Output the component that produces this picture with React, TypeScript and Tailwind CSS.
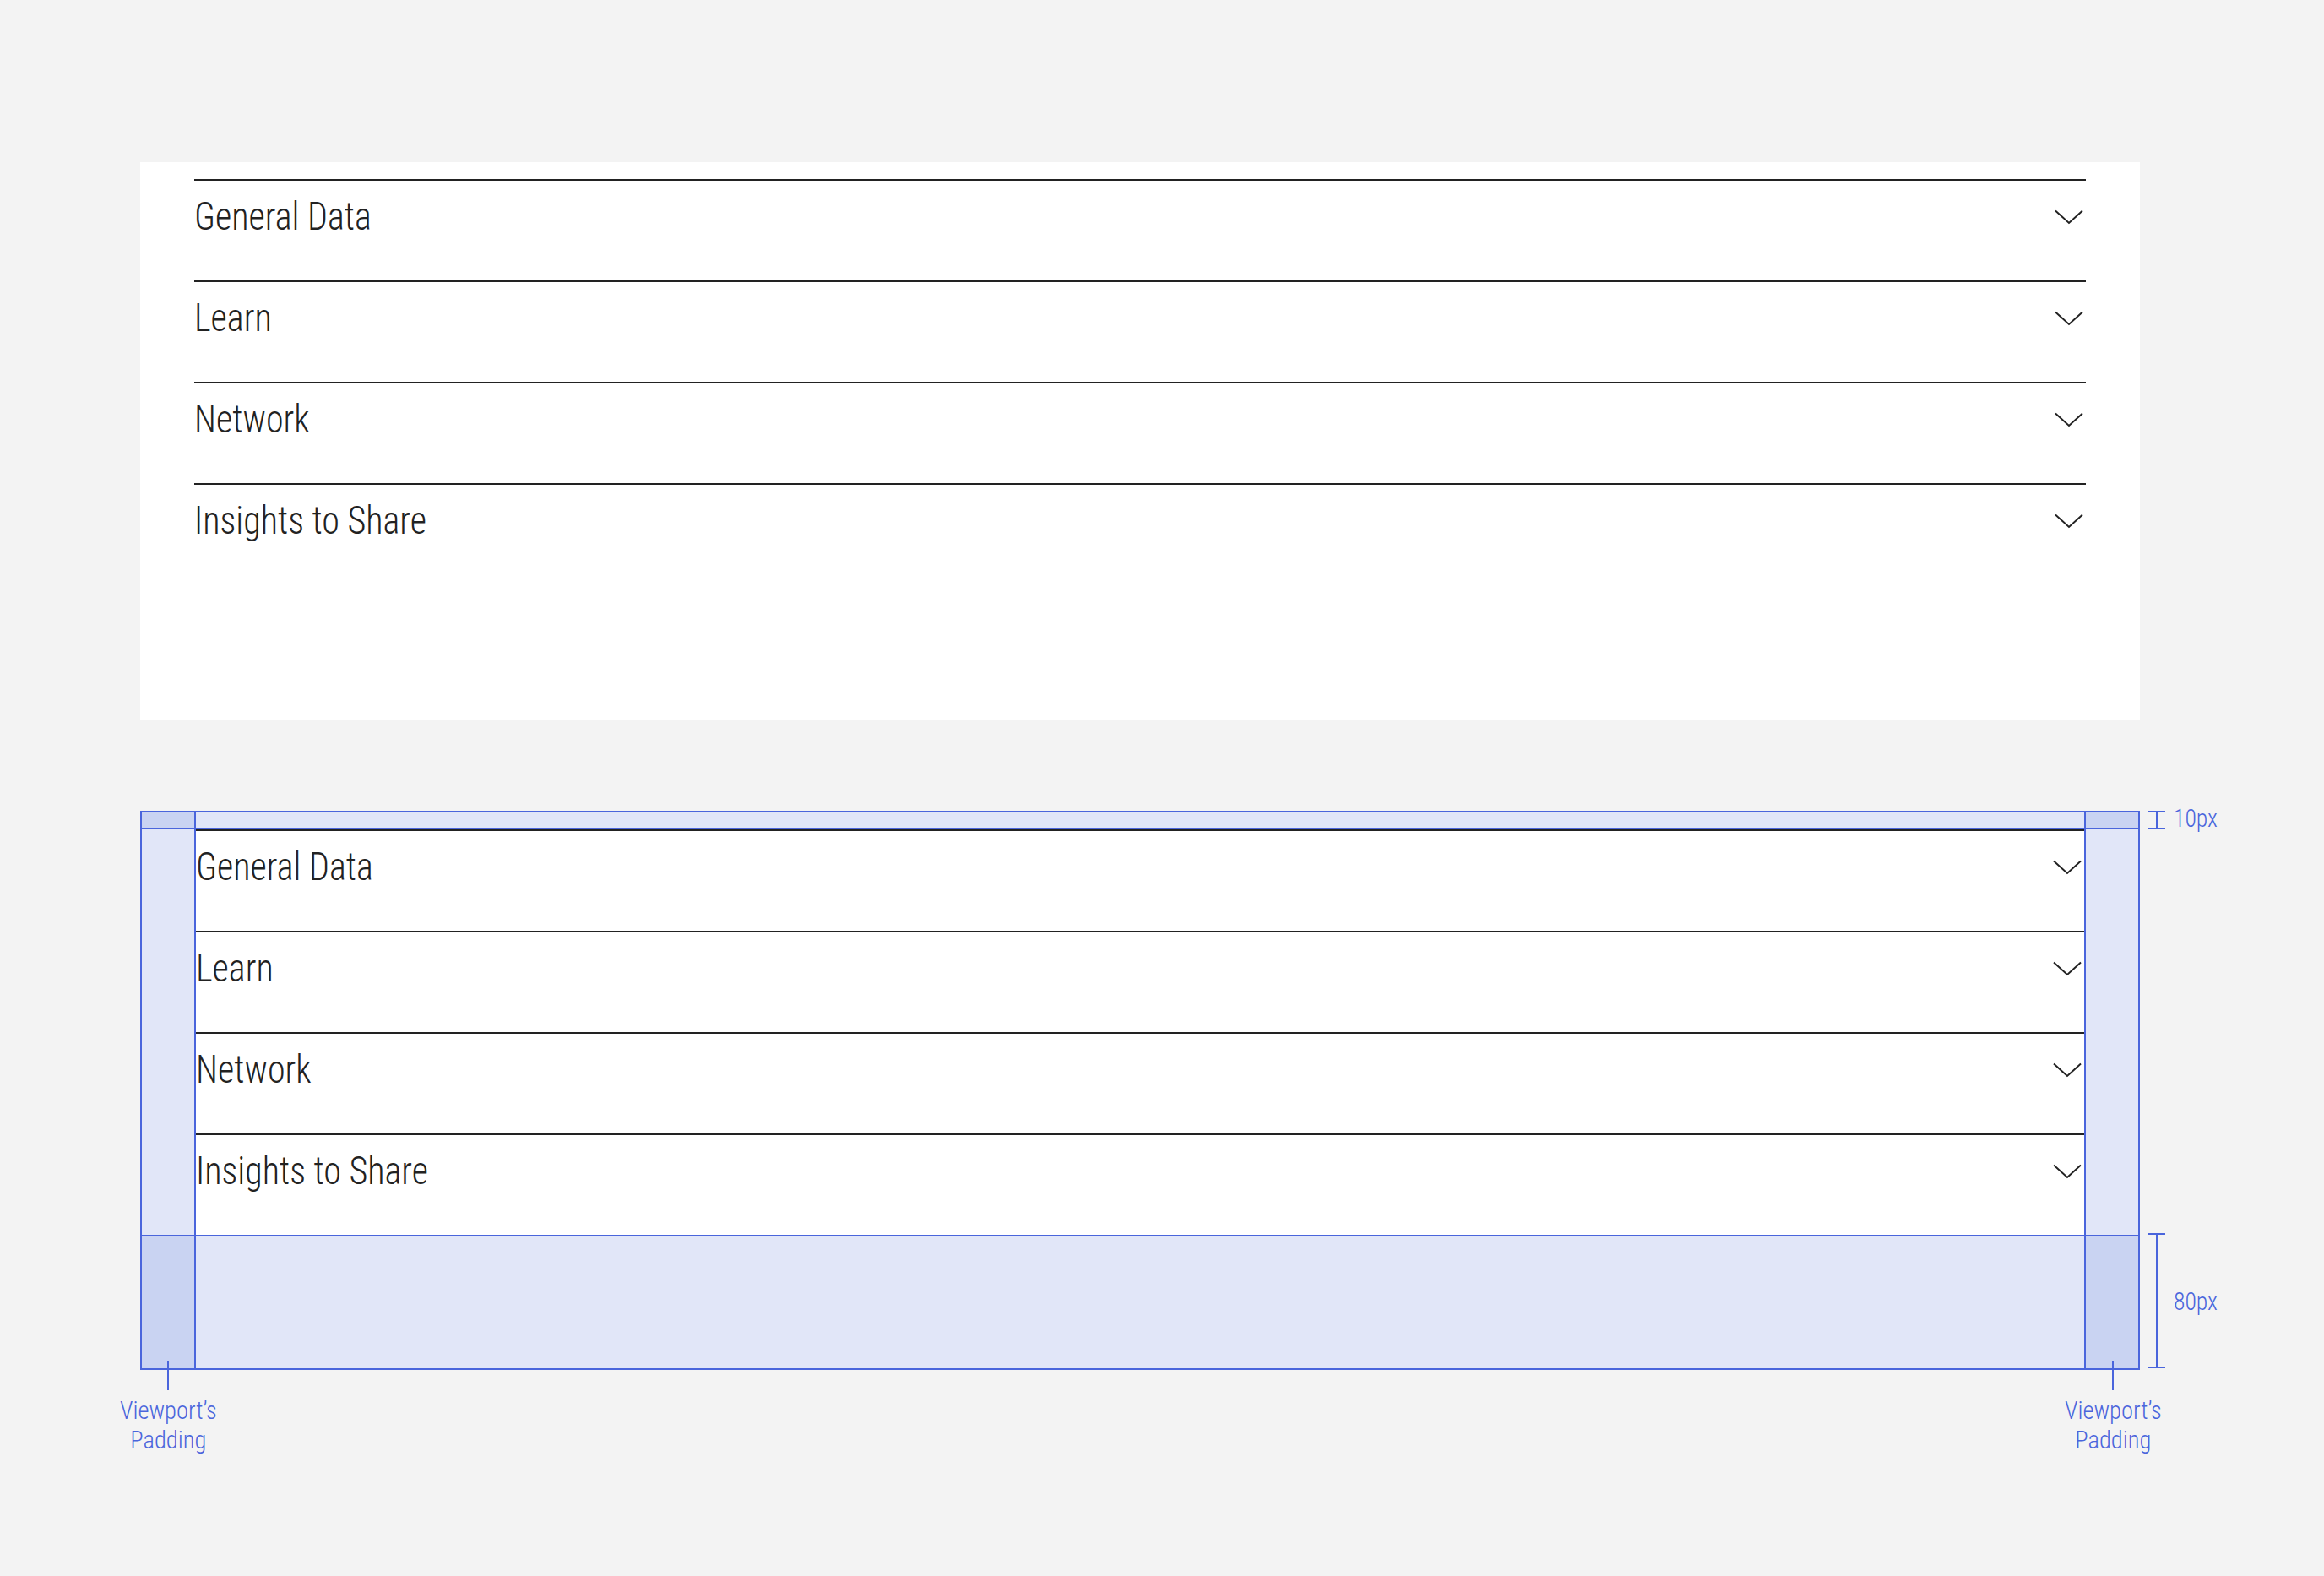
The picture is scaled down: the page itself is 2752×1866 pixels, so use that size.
import React from "react";

const items = ["General Data", "Learn", "Network", "Insights to Share"];

const Chevron = () => (
  <svg width="34" height="18" viewBox="0 0 34 18" fill="none" className="mt-[34px] mr-[3px] shrink-0">
    <polyline points="1,1.5 17,16 33,1.5" stroke="#222" strokeWidth="2" />
  </svg>
);

const Rows = () => (
  <div className="flex flex-col">
    {items.map((label) => (
      <div key={label} className="flex h-[120px] justify-between border-t-2 border-[#222]">
        <span className="origin-left scale-x-[0.915] pt-[19px] font-['Roboto_Condensed','Roboto',sans-serif] text-[46px] leading-[46px] font-light text-[#222] whitespace-nowrap">
          {label}
        </span>
        <Chevron />
      </div>
    ))}
  </div>
);

const Label = ({ children }: { children: React.ReactNode }) => (
  <span className="font-['Roboto_Condensed','Roboto',sans-serif] text-[30px] leading-[35px] font-light text-[#4a65dc] whitespace-nowrap">
    {children}
  </span>
);

const Bracket = ({ h }: { h: string }) => (
  <div className={`flex ${h} w-[20px] flex-col items-center justify-between`}>
    <div className="h-[2px] w-[20px] bg-[#4a65dc]" />
    <div className="w-[2px] flex-1 bg-[#4a65dc]" />
    <div className="h-[2px] w-[20px] bg-[#4a65dc]" />
  </div>
);

const PaddingNote = ({ left }: { left: string }) => (
  <div className={`absolute top-[652px] ${left} flex w-[266px] flex-col items-center`}>
    <div className="h-[34px] w-[2px] bg-[#4a65dc]" />
    <div className="mt-[6px] flex scale-x-[0.95] flex-col items-center text-center">
      <Label>Viewport’s</Label>
      <Label>Padding</Label>
    </div>
  </div>
);

export default function App() {
  return (
    <div className="min-h-[1866px] bg-[#f3f3f3] pt-[192px]">
      <div className="ml-[166px] w-[2368px] bg-white px-[64px] pt-[20px] pb-[160px]">
        <Rows />
      </div>

      <div className="relative mt-[108px] ml-[166px] w-[2368px]">
        <div className="grid grid-cols-[62px_1fr_62px] grid-rows-[18px_480px_156px] gap-[2px] bg-[#4a65dc] p-[2px]">
          <div className="bg-[#c9d3f2]" />
          <div className="bg-[#e1e6f8]" />
          <div className="bg-[#c9d3f2]" />
          <div className="bg-[#e1e6f8]" />
          <div className="bg-white">
            <Rows />
          </div>
          <div className="bg-[#e1e6f8]" />
          <div className="bg-[#c9d3f2]" />
          <div className="bg-[#e1e6f8]" />
          <div className="bg-[#c9d3f2]" />
        </div>

        {/* 10px marker */}
        <div className="absolute top-0 left-[2378px] flex h-[22px] items-start gap-[10px]">
          <Bracket h="h-[22px]" />
          <span className="-mt-[9px] origin-left scale-x-[0.92]">
            <Label>10px</Label>
          </span>
        </div>

        {/* 80px marker */}
        <div className="absolute top-[500px] left-[2378px] flex h-[160px] items-center gap-[10px]">
          <Bracket h="h-[160px]" />
          <span className="origin-left scale-x-[0.92]">
            <Label>80px</Label>
          </span>
        </div>

        <PaddingNote left="left-[-100px]" />
        <PaddingNote left="left-[2203px]" />
      </div>
    </div>
  );
}
